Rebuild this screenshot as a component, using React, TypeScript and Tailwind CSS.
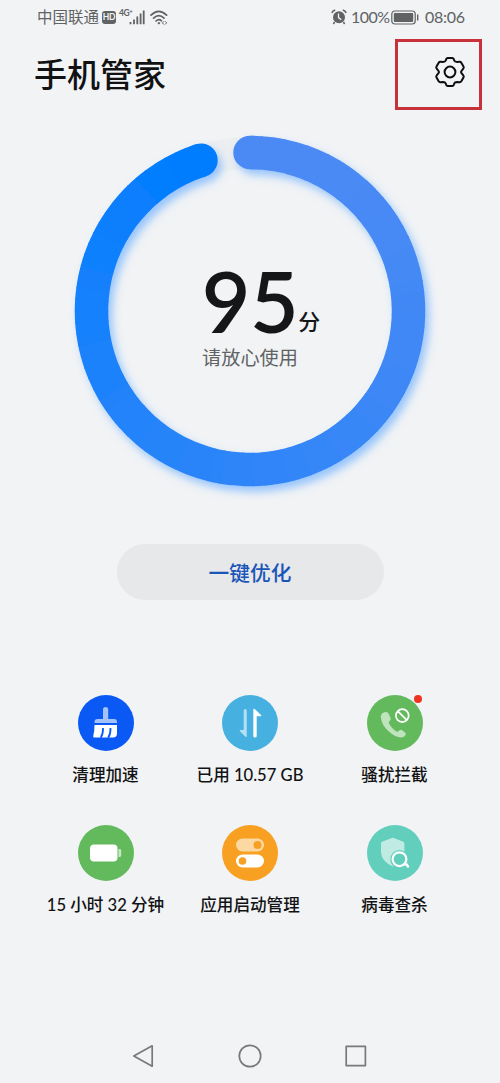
import type { ReactNode } from "react";

const RING_START = [76, 138, 244];
const RING_END = [0, 125, 255];
const SEGMENTS = 90;
const SWEEP = 342;
const RADIUS = 158.5;

function pointAt(deg: number) {
    const a = ((deg - 90) * Math.PI) / 180;
    return `${(190 + RADIUS * Math.cos(a)).toFixed(2)} ${(190 + RADIUS * Math.sin(a)).toFixed(2)}`;
}

function ringColor(t: number) {
    const eased = Math.pow(t, 1.5);
    const c = RING_START.map((v, i) => Math.round(v + (RING_END[i] - v) * eased));
    return `rgb(${c.join(",")})`;
}

function ScoreRing() {
    const step = SWEEP / SEGMENTS;
    return (
        <svg className="size-[380px]" viewBox="0 0 380 380" fill="none">
            <defs>
                <filter id="glow" x="-10%" y="-10%" width="120%" height="120%">
                    <feDropShadow dx="4" dy="5.5" stdDeviation="4.5" floodColor="#5aa5ff" floodOpacity="0.6"/>
                </filter>
            </defs>
            <circle cx="190" cy="190" r={RADIUS - 0.5} stroke="#eceef0" strokeWidth="32"/>
            <g filter="url(#glow)" strokeWidth="33.5">
                <path d={`M${pointAt(0)}A${RADIUS} ${RADIUS} 0 0 1 ${pointAt(1)}`} stroke={ringColor(0)} strokeLinecap="round"/>
                <path d={`M${pointAt(SWEEP - 1)}A${RADIUS} ${RADIUS} 0 0 1 ${pointAt(SWEEP)}`} stroke={ringColor(1)} strokeLinecap="round"/>
                {Array.from({ length: SEGMENTS }, (_, i) => (
                    <path
                        key={i}
                        d={`M${pointAt(i * step)}A${RADIUS} ${RADIUS} 0 0 1 ${pointAt(Math.min(SWEEP, (i + 1) * step + 0.4))}`}
                        stroke={ringColor(i / (SEGMENTS - 1))}
                    />
                ))}
            </g>
        </svg>
    );
}

function StatusBar() {
    return (
        <div className="flex h-[34px] items-center justify-between pl-[37px] pr-[35px] text-[15.5px] text-[#606264]">
            <div className="flex items-center">
                <span className="pt-[2px] font-normal leading-none">中国联通</span>
                <span className="ml-[3px] flex h-[13px] w-[14px] items-center justify-center rounded-[3px] bg-[#606264] text-[8.5px] font-bold tracking-tight text-[#f1f3f5]">HD</span>
                <span className="ml-[3px] -mt-[8px] w-[12px] whitespace-nowrap text-[8.5px] font-bold leading-none tracking-tighter">4G<sup className="text-[6px]">+</sup></span>
                <svg className="-ml-[2px] h-[15px] w-[16px]" viewBox="0 0 16 15" stroke="#606264" strokeWidth="1.8">
                    <path d="M1.5 12v2.3M5 9.5v4.8M8.3 6.5v7.8M11.6 3.5v10.8M14.7 .5v13.8"/>
                </svg>
                <svg className="ml-[5px] h-[15px] w-[18px]" viewBox="0 0 18 15" fill="none" stroke="#606264" strokeWidth="1.7" strokeLinecap="round">
                    <path d="M1 5.2Q8.8-2.4 16.6 5.2M3.6 8.2Q8.8 3.2 14 8.2M6 11Q8.8 8.4 11.5 10.8"/>
                    <circle cx="8.8" cy="13.2" r=".8" fill="#606264" strokeWidth=".8"/>
                    <path d="M13.6 11.6l-1.2 1.3 1.2 1.3M15.4 11.6l1.2 1.3-1.2 1.3" strokeWidth="1"/>
                </svg>
            </div>
            <div className="flex items-center">
                <svg className="h-[16px] w-[16px]" viewBox="0 0 16 16" fill="none">
                    <circle cx="8" cy="8.3" r="6" fill="#606264"/>
                    <path d="M.8 4Q1.6 1.8 4.2 1M15.2 4Q14.4 1.8 11.8 1M3.6 13l-1.2 2M12.4 13l1.2 2" stroke="#606264" strokeWidth="1.5"/>
                    <path d="M7.5 4.6v4l2.8 2.2" stroke="#f1f3f5" strokeWidth="1.3"/>
                </svg>
                <span className="ml-[4px] w-[38px] whitespace-nowrap text-[16px] leading-none tracking-[-0.5px]">100%</span>
                <svg className="ml-[2px] h-[15px] w-[28px]" viewBox="0 0 28 15" fill="none">
                    <rect x=".8" y="1" width="23.4" height="13" rx="3" stroke="#606264" strokeWidth="1.2"/>
                    <rect x="2.8" y="3" width="19.4" height="9" rx="1" fill="#606264"/>
                    <path d="M26.7 4.5v6" stroke="#606264" strokeWidth="1.4"/>
                </svg>
                <span className="ml-[6px] w-[40px] whitespace-nowrap text-[16px] leading-none tracking-[-0.3px]">08:06</span>
            </div>
        </div>
    );
}

function GearIcon() {
    return (
        <svg className="size-[32px]" viewBox="-16 -16 32 32" fill="none" stroke="#0c0d0e" strokeWidth="2" strokeLinejoin="round">
            <path d="M-2.2-13.9H2.2Q3.4-13.9 3.8-12.8L4.2-11.6Q4.8-10.1 7-10L9.6-10.2Q10.7-10.3 11.3-9.3L13.5-5.4Q14.1-4.3 13.3-3.4L12.3-2.2Q11-.6 11 0T12.3 2.2L13.3 3.4Q14.1 4.3 13.5 5.4L11.3 9.3Q10.7 10.3 9.6 10.2L7 10Q4.8 10.1 4.2 11.6L3.8 12.8Q3.4 13.9 2.2 13.9H-2.2Q-3.4 13.9-3.8 12.8L-4.2 11.6Q-4.8 10.1-7 10L-9.6 10.2Q-10.7 10.3-11.3 9.3L-13.5 5.4Q-14.1 4.3-13.3 3.4L-12.3 2.2Q-11 .6-11 0T-12.3-2.2L-13.3-3.4Q-14.1-4.3-13.5-5.4L-11.3-9.3Q-10.7-10.3-9.6-10.2L-7-10Q-4.8-10.1-4.2-11.6L-3.8-12.8Q-3.4-13.9-2.2-13.9Z"/>
            <circle r="5.4"/>
        </svg>
    );
}

function Tile({ label, color, dot, children }: { label: string; color: string; dot?: boolean; children: ReactNode }) {
    return (
        <div className="flex h-[130px] flex-col items-center">
            <div className={`relative size-[56px] rounded-full ${color}`}>
                <svg className="size-[56px]" viewBox="0 0 56 56" fill="none">{children}</svg>
                {dot && <span className="absolute left-[47px] top-0 size-[8px] rounded-full bg-[#ee3322]"/>}
            </div>
            <div className="mt-[12px] whitespace-nowrap text-[16.6px] font-medium leading-[24px] text-[#111213]">{label}</div>
        </div>
    );
}

export default function App() {
    return (
        <div className="flex h-[1083px] w-[500px] flex-col overflow-hidden bg-[#f1f3f5] font-['Lato','Noto_Sans_CJK_SC',sans-serif]">
            <StatusBar/>

            <header className="flex justify-between pl-[34px] pr-[18px] pt-[5px]">
                <h1 className="mt-[11px] text-[33px] font-medium leading-[48px] text-[#111213]">手机管家</h1>
                <div className="flex h-[71px] w-[87px] items-center border-[3px] border-[#c8313a] pb-[6px] pl-[36px]">
                    <GearIcon/>
                </div>
            </header>

            <section className="mt-[11px] grid place-items-center">
                <div className="col-start-1 row-start-1">
                    <ScoreRing/>
                </div>
                <div className="col-start-1 row-start-1 mt-[15px] flex flex-col items-center">
                    <div className="flex items-baseline pl-[22px] text-[#151617]">
                        <span className="text-[84px] font-semibold leading-[72px] tracking-[-0.5px]">95</span>
                        <span className="pb-[3px] text-[22px] font-medium leading-none -translate-y-[3px]">分</span>
                    </div>
                    <div className="mt-[5px] text-[19.2px] leading-[28px] text-[#606264]">请放心使用</div>
                </div>
            </section>

            <button className="mx-auto mt-[43px] h-[56px] w-[267px] rounded-full bg-[#e6e8ea] pt-[3px] text-[20.7px] font-medium text-[#1a55b8]">一键优化</button>

            <main className="mx-auto mt-[95px] grid w-[433.5px] grid-cols-3">
                <Tile label="清理加速" color="bg-[#0b59f5]">
                    <path d="M25 14.5a2.6 2.6 0 0 1 5.2 0V24H36a3 3 0 0 1 3 3v1H16.5v-1a3 3 0 0 1 3-3H25Z" fill="#a3c1fb"/>
                    <path d="M16.5 30H39v8.5q0 4-4 4H16q-1 0-.8-1.2Q16.5 37 16.5 30Z" fill="#fff"/>
                    <path d="M25 33q.2 6-2.3 9.8M32.5 33q.2 6-2.3 9.8" stroke="#0b59f5" strokeWidth="1.8"/>
                </Tile>
                <Tile label="已用 10.57 GB" color="bg-[#46b1e1]">
                    <path d="M21.7 15.5q0-1.5 1.5-1.5t1.5 1.5V41q0 1.6-1.3.7L18 36.3q-1-1.2.5-1.2h3.2Z" fill="#b5e0f3"/>
                    <path d="M31.3 41q0 1.5 1.7 1.5t1.7-1.5V21.2h3.8q1.5 0 .5-1.2l-6-5.8q-1.7-1.2-1.7.6Z" fill="#fff"/>
                </Tile>
                <Tile label="骚扰拦截" color="bg-[#62ba5c]" dot>
                    <path d="M16.7 17.6q-3.2 1.5-2.9 4.8 1 8 8 14 6.5 5.8 12.5 6 3.2 0 4.3-2.4.8-1.3-.4-2.3l-3-2.5q-1.3-1-2.6 0l-1.7 1.2q-1 .6-2-.1-4.5-3.1-7-7.7-.5-1 .2-1.9l1.2-1.5q.8-1.2.2-2.4l-2-4.2q-1.2-2-2.8-1.5Z" fill="#bfe3bd"/>
                    <circle cx="35.3" cy="20.6" r="6.4" stroke="#fff" strokeWidth="1.8"/>
                    <path d="M31 16.3l8.6 8.6" stroke="#fff" strokeWidth="1.8"/>
                </Tile>
                <Tile label="15 小时 32 分钟" color="bg-[#62ba5c]">
                    <rect x="12" y="19.5" width="27.5" height="17" rx="4" fill="#fff"/>
                    <path d="M40.5 24h1.3q1.4 0 1.4 1.4v5.2q0 1.4-1.4 1.4h-1.3Z" fill="#c8e7c6"/>
                </Tile>
                <Tile label="应用启动管理" color="bg-[#f7a022]">
                    <rect x="14" y="13.5" width="28" height="13" rx="6.5" fill="#fcd8a3"/>
                    <circle cx="35.5" cy="20" r="4" fill="#f7a022"/>
                    <rect x="14" y="29.5" width="28" height="13" rx="6.5" fill="#fff"/>
                    <circle cx="20.5" cy="36" r="3.8" fill="#f7a022"/>
                </Tile>
                <Tile label="病毒查杀" color="bg-[#62cfbd]">
                    <path d="M24.8 13q1-.4 2 0l9 3.5q1.6.6 1.6 2.3V27q0 9-11.6 14.5Q14 36 14 27v-8.2q0-1.7 1.6-2.3Z" fill="#bfebe3"/>
                    <circle cx="32.5" cy="34.2" r="9.2" fill="#62cfbd"/>
                    <circle cx="32.5" cy="34.2" r="6.9" stroke="#fff" strokeWidth="2.2"/>
                    <path d="M37 39.2h2.3l1.7 2.3" stroke="#fff" strokeWidth="2.6" strokeLinecap="round" strokeLinejoin="round"/>
                </Tile>
            </main>

            <nav className="mt-[89px] flex justify-between px-[132px]">
                <svg className="size-[24px]" viewBox="0 0 24 24" fill="none" stroke="#77797c" strokeWidth="1.7" strokeLinejoin="round">
                    <path d="M20.2 1.8v20.4L1.8 12Z"/>
                </svg>
                <svg className="size-[24px]" viewBox="0 0 24 24" fill="none" stroke="#77797c" strokeWidth="1.7">
                    <circle cx="12" cy="12" r="10.7"/>
                </svg>
                <svg className="size-[24px]" viewBox="0 0 24 24" fill="none" stroke="#77797c" strokeWidth="1.7" strokeLinejoin="round">
                    <rect x="2.2" y="2.4" width="19.2" height="19.2"/>
                </svg>
            </nav>
        </div>
    );
}
